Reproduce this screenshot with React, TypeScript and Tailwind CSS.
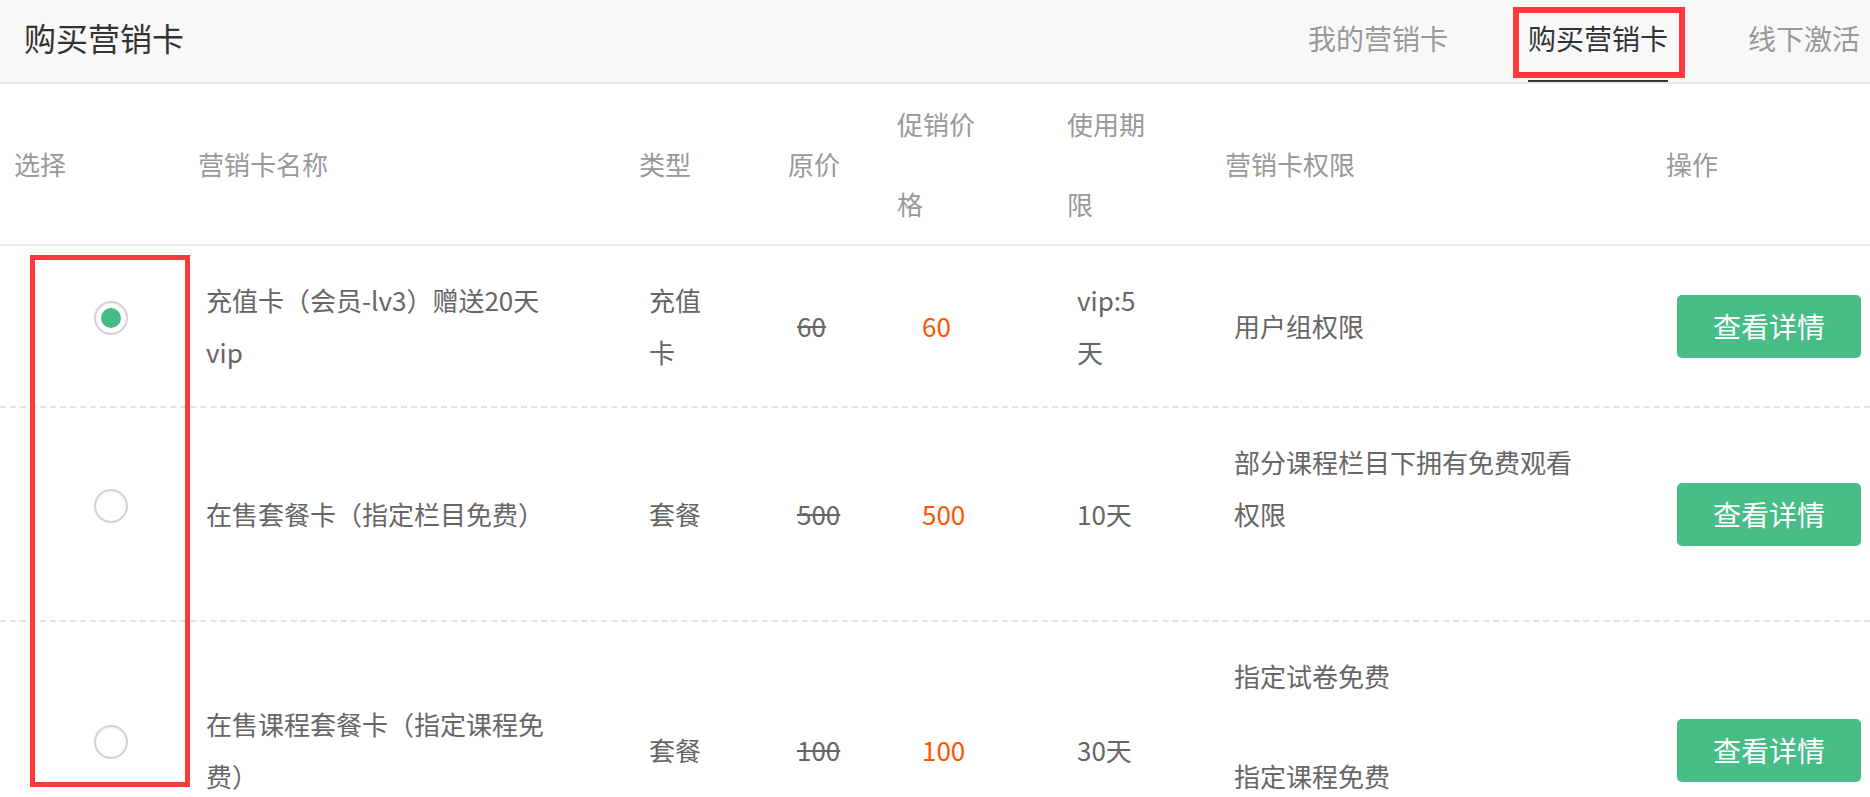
const cols =
  "grid grid-cols-[184px_441px_149px_109px_170px_158px_441px_218px]";

type Card = {
  name: string;
  type: string;
  price: string;
  sale: string;
  period: string;
  perms: { text: string; gap: string }[];
  checked: boolean;
};

const cards: Card[] = [
  {
    name: "充值卡（会员-lv3）赠送20天vip",
    type: "充值卡",
    price: "60",
    sale: "60",
    period: "vip:5天",
    perms: [{ text: "用户组权限", gap: "" }],
    checked: true,
  },
  {
    name: "在售套餐卡（指定栏目免费）",
    type: "套餐",
    price: "500",
    sale: "500",
    period: "10天",
    perms: [{ text: "部分课程栏目下拥有免费观看权限", gap: "pb-[52px]" }],
    checked: false,
  },
  {
    name: "在售课程套餐卡（指定课程免费）",
    type: "套餐",
    price: "100",
    sale: "100",
    period: "30天",
    perms: [
      { text: "指定试卷免费", gap: "pb-[48px]" },
      { text: "指定课程免费", gap: "pb-[48px]" },
    ],
    checked: false,
  },
];

function Radio({ checked }: { checked: boolean }) {
  return (
    <span className="mb-[16px] flex size-[34px] items-center justify-center rounded-full border-2 border-[#cdd4dd] bg-white shadow-[inset_0_1px_2px_rgba(0,0,0,0.08)]">
      {checked && <span className="size-[20px] rounded-full bg-[#45bb85]" />}
    </span>
  );
}

export default function App() {
  return (
    <div className="relative h-screen w-full overflow-hidden bg-white font-['Noto_Sans_CJK_SC','Liberation_Sans',sans-serif]">
      {/* top bar */}
      <div className="flex h-[84px] items-center justify-between border-b-2 border-[#e8e8e8] bg-[#f8f8f8] pr-[10px] pl-[24px]">
        <h1 className="pb-[8px] text-[32px] text-[#333]">购买营销卡</h1>
        <div className="flex h-full gap-[80px] text-[28px]">
          <div className="flex items-center border-b-2 border-transparent pb-[4px] text-[#999]">
            我的营销卡
          </div>
          <div className="flex items-center border-b-2 border-[#333] pb-[4px] text-[#333]">
            购买营销卡
          </div>
          <div className="flex items-center border-b-2 border-transparent pb-[4px] text-[#999]">
            线下激活
          </div>
        </div>
      </div>

      {/* table head */}
      <div
        className={`${cols} items-center border-b-2 border-[#ebebeb] text-[26px] leading-[80px] text-[#999]`}
      >
        <div className="pl-[14px]">选择</div>
        <div className="pl-[14px]">营销卡名称</div>
        <div className="pl-[14px]">类型</div>
        <div className="pl-[14px]">原价</div>
        <div className="w-[104px] pl-[14px]">促销价格</div>
        <div className="w-[104px] pl-[14px]">使用期限</div>
        <div className="pl-[14px]">营销卡权限</div>
        <div className="pl-[14px]">操作</div>
      </div>

      {/* table body */}
      {cards.map((c) => (
        <div
          key={c.name}
          className={`${cols} items-center border-b-2 border-dashed border-[#e3e3e3] py-[28px] text-[26px] leading-[52px] text-[#666]`}
        >
          <div className="pl-[94px]">
            <Radio checked={c.checked} />
          </div>
          <div className="pl-[22px]">
            <div className="max-w-[350px]">{c.name}</div>
          </div>
          <div className="pl-[24px]">
            <div className="max-w-[66px]">{c.type}</div>
          </div>
          <div className="pl-[23px] line-through">{c.price}</div>
          <div className="pl-[39px] text-[#ff5500]">{c.sale}</div>
          <div className="pl-[24px]">
            <div className="max-w-[72px]">{c.period}</div>
          </div>
          <div className="pl-[23px]">
            {c.perms.map((p) => (
              <div key={p.text} className={p.gap}>
                <div className="max-w-[350px]">{p.text}</div>
              </div>
            ))}
          </div>
          <div className="pl-[25px]">
            <button className="h-[63px] w-[184px] rounded-[5px] bg-[#48bd88] text-[28px] leading-none text-white">
              查看详情
            </button>
          </div>
        </div>
      ))}

      {/* red annotation boxes */}
      <div className="pointer-events-none absolute top-[7px] left-[1513px] h-[71px] w-[172px] border-[6px] border-[#fc3a3a]" />
      <div className="pointer-events-none absolute top-[255px] left-[30px] h-[532px] w-[160px] border-[5px] border-[#fc3a3a]" />
    </div>
  );
}
